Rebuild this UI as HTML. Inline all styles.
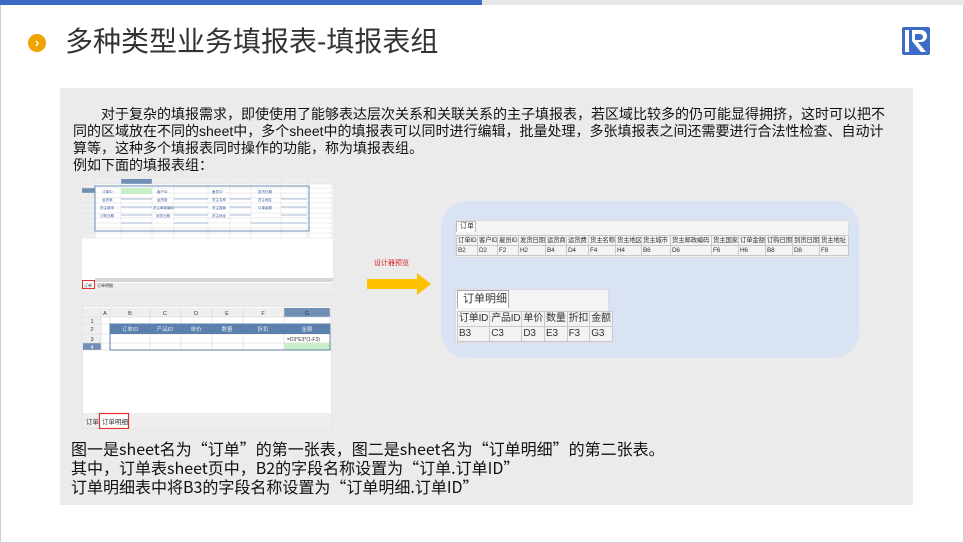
<!DOCTYPE html>
<html><head><meta charset="utf-8"><style>
*{margin:0;padding:0;box-sizing:border-box}
body{width:964px;height:543px;position:relative;background:#fff;font-family:"Liberation Sans","Noto Sans CJK SC",sans-serif;overflow:hidden}
.a{position:absolute}
.t{font-size:14px;color:#111;line-height:17px;white-space:nowrap}
table{border-collapse:collapse;font-size:9px;font-family:"Liberation Sans","Noto Sans CJK SC",sans-serif;color:#333}
td{border:1px solid #c8c8c8;padding:0 1px;white-space:nowrap;background:#f3f3f3;overflow:hidden}
</style></head><body>
<div class="a" style="left:0;top:0;width:964px;height:543px;border:1px solid #cfcfcf;border-top:none"></div>
<div class="a" style="left:0;top:0;width:964px;height:5px;background:#e6e6e6"></div>
<div class="a" style="left:0;top:0;width:482px;height:5px;background:#3a6cc4"></div>
<div class="a" style="left:28px;top:34px;width:18px;height:18px;border-radius:50%;background:#f0a400;color:#fff;font-size:13px;font-weight:bold;line-height:17px;text-align:center">›</div>
<div class="a" style="left:65px;top:24px;font-size:28px;color:#333;line-height:36px">多种类型业务填报表-填报表组</div>
<svg class="a" style="left:901px;top:26px" width="30" height="30" viewBox="0 0 30 30"><rect x="1" y="1" width="28" height="28" fill="#3c6cc8" rx="2"/><rect x="4" y="4" width="4" height="22" fill="#fff"/><path d="M11 4h9a6 6 0 0 1 0 12h-3l8 10h-5l-9-11V4z" fill="#fff"/><path d="M14 8h5a3 3 0 0 1 0 6h-5z" fill="#3c6cc8"/></svg>
<div class="a" style="left:60px;top:88px;width:853px;height:417px;background:#ebebeb"></div>
<div class="a t" style="left:73px;top:106px">　　对于复杂的填报需求，即使使用了能够表达层次关系和关联关系的主子填报表，若区域比较多的仍可能显得拥挤，这时可以把不<br>同的区域放在不同的sheet中，多个sheet中的填报表可以同时进行编辑，批量处理，多张填报表之间还需要进行合法性检查、自动计<br>算等，这种多个填报表同时操作的功能，称为填报表组。<br>例如下面的填报表组：</div>
<!-- top sheet -->
<svg class="a" style="left:82px;top:179px" width="251" height="113" viewBox="82 179 251 113">
<rect x="82" y="179" width="251" height="113" fill="#fff"/>
<rect x="82" y="179" width="251" height="5" fill="#eee"/>
<rect x="121" y="179" width="31" height="5" fill="#6f8fb5"/>
<rect x="82" y="184" width="13" height="54" fill="#eee"/>
<rect x="82" y="188" width="13" height="5" fill="#6f8fb5"/>
<g stroke="#dcdcdc" stroke-width="0.5">
<path d="M95 179v59M121 179v59M152 179v59M174 179v59M208 179v59M230 179v59M251 179v59M281 179v59M307 179v59M309 179v59M332 179v59"/>
<path d="M82 184h251M82 188h251M82 193h251M82 198h251M82 203h251M82 208h251M82 213h251M82 218h251M82 223h251M82 228h251M82 233h251M82 238h251"/>
</g>
<rect x="95" y="186" width="214" height="45" fill="none" stroke="#6d8db5" stroke-width="1"/>
<rect x="121" y="188" width="31" height="6" fill="#c8f0c8"/>
<g stroke="#8fa9c9" stroke-width="0.8"><path d="M121 199h31M174 199h34M230 199h21M281 199h26M121 207h31M174 207h34M230 207h21M281 207h26M121 215h31M174 215h34M230 215h21M281 215h26M121 223h31M174 223h34M251 223h56"/></g>
<g fill="#3a5a9a" font-size="3.5"><text x="102" y="193">订单ID</text><text x="157" y="193">客户ID</text><text x="212" y="193">雇员ID</text><text x="258" y="193">发货日期</text><text x="102" y="201">运货商</text><text x="157" y="201">运货费</text><text x="212" y="201">货主名称</text><text x="258" y="201">货主地区</text><text x="100" y="209">货主城市</text><text x="153" y="209">货主邮政编码</text><text x="212" y="209">货主国家</text><text x="258" y="209">订单金额</text><text x="100" y="217">订购日期</text><text x="156" y="217">到货日期</text><text x="212" y="217">货主地址</text></g>
<rect x="95" y="278" width="238" height="4" fill="#d6d6d6"/>
<rect x="82" y="283" width="251" height="9" fill="#eee"/>
<rect x="82.5" y="280.5" width="12" height="8" fill="#fff" stroke="#e03030"/>
<text x="84" y="287" font-size="4" fill="#333">订单</text><text x="97" y="287" font-size="4" fill="#333">订单明细</text>
</svg>
<!-- bottom sheet -->
<svg class="a" style="left:82px;top:306px" width="250" height="123" viewBox="82 306 250 123">
<rect x="82" y="306" width="250" height="123" fill="#fff" stroke="#ccc"/>
<rect x="83" y="308" width="248" height="9" fill="#eee"/>
<rect x="284" y="308" width="46" height="9" fill="#6f8fb5"/>
<rect x="83" y="317" width="18" height="33" fill="#eee"/>
<rect x="83" y="343" width="18" height="7" fill="#6f8fb5"/>
<g stroke="#d4d4d4" stroke-width="0.6"><path d="M101 308v42M110 308v42M150 308v42M181 308v42M212 308v42M243 308v42M284 308v42M330 308v42M83 317h248M83 324h248M83 334h248M83 343h248M83 350h248"/></g>
<rect x="110" y="324" width="220" height="10" fill="#5b80ad"/>
<rect x="284" y="343" width="46" height="7" fill="#c8f0c8"/>
<rect x="110" y="324" width="220" height="26" fill="none" stroke="#5b80ad" stroke-width="1"/>
<g font-size="5.5" fill="#333" text-anchor="middle"><text x="105" y="315">A</text><text x="130" y="315">B</text><text x="165" y="315">C</text><text x="196" y="315">D</text><text x="227" y="315">E</text><text x="263" y="315">F</text><text x="307" y="315">G</text><text x="92" y="323">1</text><text x="92" y="331">2</text><text x="92" y="341">3</text><text x="92" y="349" fill="#fff">4</text></g>
<g font-size="5.5" fill="#dfe8f3" text-anchor="middle"><text x="130" y="331">订单ID</text><text x="165" y="331">产品ID</text><text x="196" y="331">单价</text><text x="227" y="331">数量</text><text x="263" y="331">折扣</text><text x="307" y="331">金额</text></g>
<text x="287" y="341" font-size="5" fill="#333">=D3*E3*(1-F3)</text>
<rect x="83" y="413" width="248" height="15" fill="#eee"/>
<rect x="99.5" y="413.5" width="29" height="15" fill="#fff" stroke="#e03030" stroke-width="1.2"/>
<text x="86" y="424" font-size="6.5" fill="#333">订单</text><text x="102" y="424" font-size="6.5" fill="#333">订单明细</text>
</svg>
<div class="a" style="left:374px;top:258px;font-size:7px;color:#e02020;white-space:nowrap">设计器预览</div>
<svg class="a" style="left:366px;top:272px" width="66" height="24"><path d="M1 7h50V1l14 11-14 11v-6H1z" fill="#ffc000"/></svg>
<div class="a" style="left:441px;top:201px;width:418px;height:157px;background:#dae3f3;border-radius:26px"></div>
<div class="a" style="left:455px;top:220px;width:394px;height:38px;background:#f4f4f4;border:1px solid #ddd"></div>
<div class="a" style="left:456px;top:221px;width:20px;height:11px;background:#fff;border:1px solid #bbb;border-bottom:none;font-size:7px;line-height:10px;padding-left:3px;color:#333">订单</div>
<table class="a" style="left:456px;top:235px;width:392px;table-layout:fixed;font-size:6.4px;line-height:9px;letter-spacing:-0.2px"><colgroup><col style="width:21px"><col style="width:20px"><col style="width:21px"><col style="width:27px"><col style="width:21px"><col style="width:22px"><col style="width:27px"><col style="width:26px"><col style="width:29px"><col style="width:41px"><col style="width:27px"><col style="width:27px"><col style="width:27px"><col style="width:27px"><col style="width:29px"></colgroup><tr><td>订单ID</td><td>客户ID</td><td>雇员ID</td><td>发货日期</td><td>运货商</td><td>运货费</td><td>货主名称</td><td>货主地区</td><td>货主城市</td><td>货主邮政编码</td><td>货主国家</td><td>订单金额</td><td>订购日期</td><td>到货日期</td><td>货主地址</td></tr><tr><td>B2</td><td>D2</td><td>F2</td><td>H2</td><td>B4</td><td>D4</td><td>F4</td><td>H4</td><td>B6</td><td>D6</td><td>F6</td><td>H6</td><td>B8</td><td>D8</td><td>F8</td></tr></table>
<div class="a" style="left:455px;top:289px;width:154px;height:54px;background:#f4f4f4;border:1px solid #ddd"></div>
<div class="a" style="left:457px;top:290px;width:52px;height:18px;background:#fff;border:1px solid #aaa;border-bottom:none;font-size:11px;line-height:17px;padding-left:5px;color:#333;white-space:nowrap">订单明细</div>
<table class="a" style="left:457px;top:311px;font-size:10px;line-height:14px;letter-spacing:-0.2px"><tr><td>订单ID</td><td>产品ID</td><td>单价</td><td>数量</td><td>折扣</td><td>金额</td></tr><tr><td>B3</td><td>C3</td><td>D3</td><td>E3</td><td>F3</td><td>G3</td></tr></table>
<div class="a" style="left:71px;top:439px;font-family:'Noto Sans CJK SC',sans-serif;font-size:16px;line-height:19px;color:#111;white-space:nowrap">图一是sheet名为“订单”的第一张表，图二是sheet名为“订单明细”的第二张表。<br>其中，订单表sheet页中，B2的字段名称设置为“订单.订单ID”<br>订单明细表中将B3的字段名称设置为“订单明细.订单ID”</div>
</body></html>
